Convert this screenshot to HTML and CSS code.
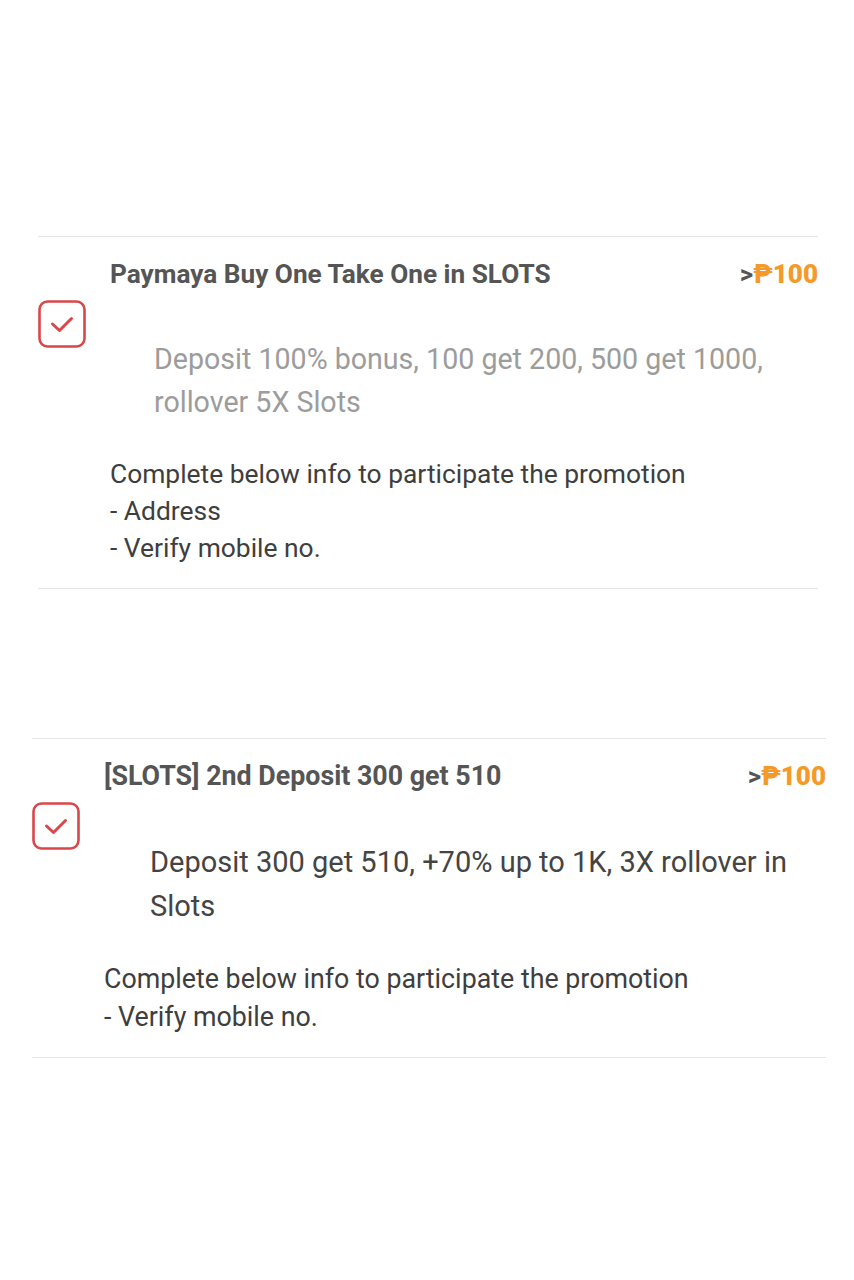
FILE: index.html
```html
<!DOCTYPE html>
<html lang="en">
<head>
  <meta charset="UTF-8">
  <title>Promotions</title>
  <link rel="stylesheet" href="styles.css">
</head>
<body>
  <div class="list">
    <section class="promo first">
      <div class="promo-head">
        <h3>Paymaya Buy One Take One in SLOTS</h3>
        <span class="min">&gt;<b>₱100</b></span>
      </div>
      <div class="promo-body">
        <span class="check">
          <svg viewBox="0 0 48 48" width="48" height="48">
            <rect x="1.5" y="1.5" width="45" height="45" rx="8" fill="none" stroke="#d9474b" stroke-width="2.6"/>
            <path d="M14.5 24 L21.5 30.5 L33.5 18.5" fill="none" stroke="#d9474b" stroke-width="3" stroke-linecap="round" stroke-linejoin="round"/>
          </svg>
        </span>
        <p class="desc muted">Deposit 100% bonus, 100 get 200, 500 get 1000, rollover 5X Slots</p>
      </div>
      <div class="req">
        Complete below info to participate the promotion<br>
        - Address<br>
        - Verify mobile no.
      </div>
    </section>

    <section class="promo second">
      <div class="promo-head">
        <h3>[SLOTS] 2nd Deposit 300 get 510</h3>
        <span class="min">&gt;<b>₱100</b></span>
      </div>
      <div class="promo-body">
        <span class="check">
          <svg viewBox="0 0 48 48" width="48" height="48">
            <rect x="1.5" y="1.5" width="45" height="45" rx="8" fill="none" stroke="#d9474b" stroke-width="2.6"/>
            <path d="M14.5 24 L21.5 30.5 L33.5 18.5" fill="none" stroke="#d9474b" stroke-width="3" stroke-linecap="round" stroke-linejoin="round"/>
          </svg>
        </span>
        <p class="desc">Deposit 300 get 510, +70% up to 1K, 3X rollover in Slots</p>
      </div>
      <div class="req">
        Complete below info to participate the promotion<br>
        - Verify mobile no.
      </div>
    </section>
  </div>
</body>
</html>
```

FILE: styles.css
```css
body {
  margin: 0;
  background: #fff;
  font-family: Roboto, 'Noto Sans', Arial, sans-serif;
  color: #444;
}
.list {
  padding-top: 236px;
}
.promo {
  border-top: 1.5px solid #e6e6e6;
  border-bottom: 1.5px solid #e6e6e6;
  padding: 22px 0 21px;
}
.promo.first {
  margin: 0 36px 0 38px;
}
.promo.second {
  margin: 149px 28px 0 32px;
}
.promo-head {
  display: flex;
  justify-content: space-between;
  align-items: center;
  padding-left: 72px;
}
.promo-head h3 {
  margin: 0;
  font-size: 26.2px;
  line-height: 30px;
  font-weight: bold;
  color: #555;
}
.min {
  font-size: 26px;
  font-weight: bold;
  color: #555;
}
.min b { color: #f39a2a; }
.promo-body {
  display: grid;
  grid-template-columns: 72px 1fr;
}
.check {
  margin-top: 11px;
  width: 48px;
  height: 48px;
}
.check svg { display: block; }
.desc {
  margin: 49px 0 0;
  padding-left: 44px;
  font-size: 28.6px;
  line-height: 43px;
  color: #444;
}
.desc.muted { color: #9c9c9c; }
.req {
  margin-top: 32px;
  padding-left: 72px;
  font-size: 26.4px;
  line-height: 37px;
  color: #3e3e3e;
}
.second .promo-head h3 {
  font-size: 26.8px;
}
.second .desc {
  font-size: 29px;
  line-height: 44px;
  padding-left: 46px;
}
.second .req {
  font-size: 26.8px;
  line-height: 38px;
}
```
